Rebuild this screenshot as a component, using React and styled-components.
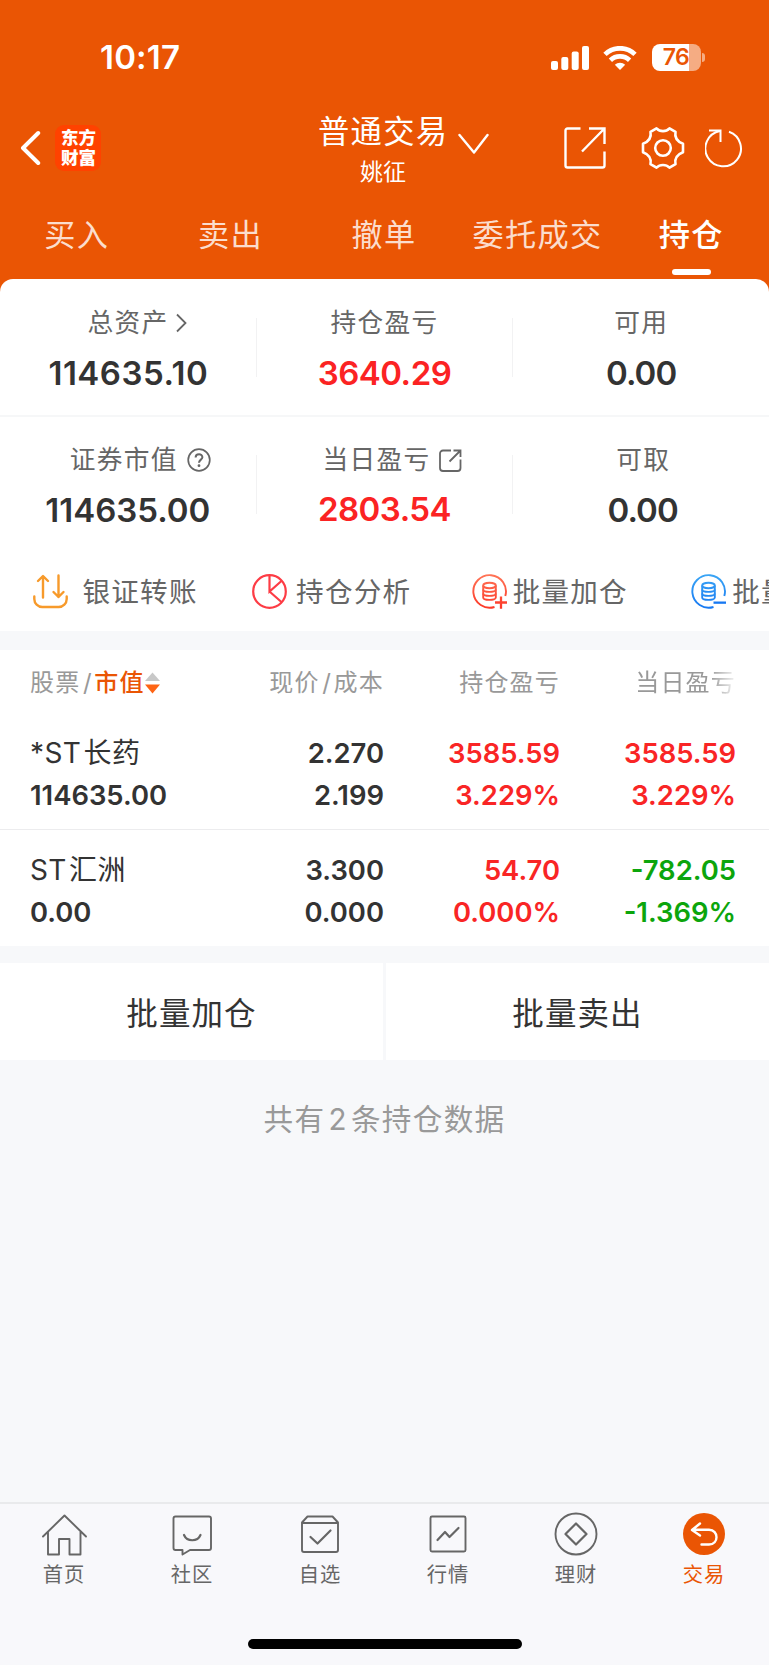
import React, { useState } from 'react';
import styled, { createGlobalStyle } from 'styled-components';

const GlobalStyle = createGlobalStyle`
  * {
    box-sizing: border-box;
  }

  body {
    margin: 0;
    background-color: #f7f8fa;
    font-family: 'Inter', 'Noto Sans CJK SC', sans-serif;
    color: #333;
  }

  svg {
    display: block;
    flex-shrink: 0;
  }
`;

const Page = styled.div`
  width: 100%;
  min-height: 1665px;
  display: flex;
  flex-direction: column;
  overflow: hidden;
`;

const Header = styled.header`
  background-color: #ea5504;
  color: #fff;
`;

const StatusBar = styled.div`
  height: 96px;
  padding: 19px 64.5px 0 100px;
  display: flex;
  align-items: center;
`;

const Clock = styled.div`
  margin: 0 auto 1px 0;
  font-size: 33px;
  font-weight: 600;
  letter-spacing: 0.2px;
`;

const Battery = styled.div`
  width: 49px;
  height: 27px;
  margin: 0 1px 0 15px;
  border-radius: 8px;
  background: linear-gradient(to right, #fff 37px, #f5ac83 37px);
  color: #ea5504;
  font-size: 23px;
  font-weight: 600;
  line-height: 27px;
  letter-spacing: -0.5px;
  text-align: center;
`;

const BatteryTip = styled.div`
  width: 3px;
  height: 9px;
  border-radius: 0 3px 3px 0;
  background-color: #f5ac83;
`;

const NavBar = styled.div`
  height: 104px;
  padding: 0 24px 0 20px;
  display: flex;
  align-items: center;
`;

const AppLogo = styled.div`
  width: 46px;
  height: 46px;
  margin-left: 14px;
  padding: 3px 4px 0 5px;
  border-radius: 9px;
  background-color: #ff4200;
  font-size: 17.5px;
  font-weight: 900;
  line-height: 19.5px;
  text-align: center;
  word-break: break-all;
`;

const Account = styled.div`
  margin: 5px 0 0 217px;
  width: 130px;
  text-align: center;
`;

const AccountType = styled.div`
  font-size: 31.3px;
  line-height: 40px;
  letter-spacing: 1.3px;
  white-space: nowrap;
`;

const AccountName = styled.div`
  margin-top: 3.5px;
  font-size: 23px;
  line-height: 34px;
`;

const AccountArrow = styled.div`
  margin: 0 0 9px 10px;
`;

const NavIcons = styled.div`
  margin-left: auto;
  display: grid;
  grid-template-columns: 77px 64px 40px;
  align-items: center;
`;

const TabList = styled.nav`
  height: 79px;
  padding: 2px 1px 0 0;
  display: grid;
  grid-template-columns: repeat(5, 1fr);
`;

const Tab = styled.div`
  display: flex;
  flex-direction: column;
  align-items: center;
  font-size: 31.2px;
  line-height: 67px;
  letter-spacing: 1.3px;
  font-weight: ${(props) => (props.$active ? 500 : 400)};
  color: ${(props) => (props.$active ? '#fff' : '#fbddcd')};

  &:after {
    content: '';
    width: 39px;
    height: 6px;
    border-radius: 3px;
    background-color: ${(props) => (props.$active ? '#fff' : 'transparent')};
  }
`;

const SummaryBack = styled.div`
  background-color: #ea5504;
`;

const Summary = styled.section`
  background-color: #fff;
  border-radius: 13px 13px 0 0;
`;

const SummaryRow = styled.div`
  height: ${(props) => props.$height}px;
  display: flex;
  border-bottom: ${(props) => (props.$line ? '2px solid #f6f7f8' : 'none')};
`;

const SummaryCell = styled.div`
  flex: 1;
  padding-top: ${(props) => props.$top}px;
`;

const CellDivider = styled.div`
  width: 1px;
  height: 59px;
  margin-top: ${(props) => props.$top}px;
  background-color: #f2f2f3;
`;

const SummaryLabel = styled.div`
  height: 36px;
  padding-left: ${(props) => props.$shift || 0}px;
  display: flex;
  align-items: center;
  justify-content: center;
  color: #666;
  font-size: 25.7px;
  line-height: 36px;
  letter-spacing: 1.3px;
`;

const SummaryValue = styled.div`
  margin-top: ${(props) => props.$gap}px;
  padding-left: ${(props) => props.$shift || 0}px;
  color: ${(props) => (props.$red ? '#fb2323' : '#333')};
  font-size: 33px;
  font-weight: 600;
  line-height: 44px;
  letter-spacing: ${(props) => props.$spacing || 0}px;
  text-align: center;
`;

const Actions = styled.div`
  height: 79px;
  padding: 0 0 3px 32.5px;
  display: flex;
  overflow: hidden;
  background-color: #fff;
`;

const Action = styled.div`
  flex: 0 0 219.6px;
  display: flex;
  align-items: center;
  gap: ${(props) => props.$gap}px;
  color: #666;
  font-size: 27.6px;
  letter-spacing: 1.2px;
  white-space: nowrap;

  svg {
    margin-top: 3px;
  }
`;

const Table = styled.section`
  margin-top: 19px;
  background-color: #fff;
`;

const TableRow = styled.div`
  display: grid;
  grid-template-columns: 1fr 180px 176px 176px;
  padding: 0 33px 0 30px;
`;

const HeadRow = styled(TableRow)`
  height: 82px;
  padding-top: 14.5px;
  color: #999;
  font-size: 24px;
  line-height: 36px;
  letter-spacing: 1.2px;
`;

const HeadCell = styled.div`
  display: flex;
  align-items: center;
  height: 36px;
  justify-content: ${(props) => (props.$left ? 'flex-start' : 'flex-end')};
  ${(props) =>
    props.$fade &&
    'mask-image: linear-gradient(to right, #000 150px, rgba(0, 0, 0, 0.1) 176px);'}
`;

const SortName = styled.span`
  color: #ea5504;
  font-weight: 500;
`;

const Slash = styled.span`
  margin: 0 1.5px 0 2.5px;
`;

const StockRow = styled(TableRow)`
  height: ${(props) => props.$height}px;
  border-bottom: ${(props) => (props.$line ? '1px solid #ececee' : 'none')};
`;

const StockCell = styled.div`
  padding-top: ${(props) => props.$top}px;
  color: ${(props) => props.$color || '#333'};
  font-size: 27.4px;
  font-weight: 600;
  line-height: 42px;
  text-align: ${(props) => (props.$left ? 'left' : 'right')};
  white-space: nowrap;
`;

const StockName = styled.div`
  font-size: 28px;
  font-weight: 400;
  letter-spacing: 0.4px;
  word-spacing: -6px;
`;

const BatchBar = styled.div`
  margin-top: 17px;
  height: 97px;
  display: grid;
  grid-template-columns: 383px 1fr;
  gap: 3px;
`;

const BatchButton = styled.button`
  border: none;
  padding: 0 0 2px 0;
  background-color: #fff;
  color: #333;
  font-family: inherit;
  font-size: 31.5px;
  letter-spacing: 1.1px;
`;

const Total = styled.div`
  margin-top: 39px;
  color: #999;
  font-size: 29.6px;
  line-height: 40px;
  letter-spacing: 1.3px;
  word-spacing: -6.5px;
  text-align: center;
`;

const BottomBar = styled.footer`
  margin-top: auto;
  height: 163px;
  border-top: 2px solid #e9eaec;
  background-color: #f8f8fb;
`;

const BottomTabs = styled.nav`
  height: 135px;
  padding: 8px 1px 0 0;
  display: grid;
  grid-template-columns: repeat(6, 1fr);
`;

const BottomTab = styled.div`
  display: flex;
  flex-direction: column;
  align-items: center;
  color: ${(props) => (props.$active ? '#ea5504' : '#666')};
  font-size: 20.3px;
  line-height: 28px;
  letter-spacing: 1px;

  span {
    margin-top: 3px;
  }
`;

const HomeIndicator = styled.div`
  width: 274px;
  height: 10px;
  margin: 0 auto;
  border-radius: 5px;
  background-color: #000;
`;

const SignalIcon = () => (
  <svg width="38" height="24" viewBox="0 0 38 24" fill="#fff">
    <rect x="0" y="15" width="7" height="9" rx="2" />
    <rect x="10.3" y="11" width="7" height="13" rx="2" />
    <rect x="20.7" y="5.5" width="7" height="18.5" rx="2" />
    <rect x="31" y="0" width="7" height="24" rx="2" />
  </svg>
);

const WifiSvg = styled.svg`
  margin-left: 14px;
`;

const WifiIcon = () => (
  <WifiSvg width="34" height="24" viewBox="0 0 34 24">
    <g fill="none" stroke="#fff" strokeWidth="4.8">
      <path d="M2 8.4A21.5 21.5 0 0 1 32 8.4" />
      <path d="M7.4 14.2A14 14 0 0 1 26.6 14.2" />
    </g>
    <path d="M17 24L11.8 18.8A7.4 7.4 0 0 1 22.2 18.8Z" fill="#fff" />
  </WifiSvg>
);

const BackIcon = () => (
  <svg width="21" height="36" viewBox="0 0 21 36" fill="none" stroke="#fff" strokeWidth="4" strokeLinecap="round" strokeLinejoin="round">
    <path d="M18.2 3L3 18l15.2 15" />
  </svg>
);

const DownIcon = () => (
  <svg width="31" height="22" viewBox="0 0 31 22" fill="none" stroke="#fff" strokeWidth="2.4" strokeLinecap="round" strokeLinejoin="round">
    <path d="M1.5 2L16 19.5L29.5 2" />
  </svg>
);

const ShareIcon = () => (
  <svg width="42" height="42" viewBox="0 0 42 42" fill="none" stroke="#fff" strokeWidth="2.4">
    <path d="M16.5 1.5H3.5a2 2 0 0 0-2 2v35a2 2 0 0 0 2 2h35a2 2 0 0 0 2-2V24.5" />
    <path d="M25 1.5H40.5V17M40 2L18 24.5" />
  </svg>
);

const GearIcon = () => (
  <svg width="44" height="44" viewBox="0 0 44 44" fill="none" stroke="#fff" strokeWidth="2.6" strokeLinejoin="round">
    <path d="M28.5 2.3L34.5 5.8C33.5 11 36 15.5 42 17.8V26.2C36 28.5 33.5 33 34.5 38.2L28.5 41.7C25 38 19 38 15.5 41.7L9.5 38.2C10.5 33 8 28.5 2 26.2V17.8C8 15.5 10.5 11 9.5 5.8L15.5 2.3C19 6 25 6 28.5 2.3Z" />
    <circle cx="22" cy="22" r="7.8" />
  </svg>
);

const RefreshIcon = () => (
  <svg width="40" height="40" viewBox="0 0 40 40" fill="none" stroke="#fff" strokeWidth="2">
    <path d="M24 3.7A17.8 17.8 0 1 1 15 3" />
    <path d="M4 2.6H15.5V14" />
  </svg>
);

const LabelSvg = styled.svg`
  margin-left: ${(props) => props.$gap}px;
`;

const ChevronIcon = () => (
  <LabelSvg $gap={7.5} width="11" height="20" viewBox="0 0 11 20" fill="none" stroke="#666" strokeWidth="1.8">
    <path d="M1 1.5L9.5 10L1 18.5" />
  </LabelSvg>
);

const HelpIcon = () => (
  <LabelSvg $gap={9} width="24" height="24" viewBox="0 0 24 24" fill="none" stroke="#666" strokeWidth="1.7">
    <circle cx="12" cy="12" r="10.8" />
    <path d="M8.6 9.5C8.6 5 15.5 5.2 15.4 9.3C15.3 11.6 12 11.8 12 14.8" strokeWidth="2" />
    <circle cx="12" cy="17.7" r="1.4" fill="#666" stroke="none" />
  </LabelSvg>
);

const DetailIcon = () => (
  <LabelSvg $gap={9} width="23" height="23" viewBox="0 0 23 23" fill="none" stroke="#666" strokeWidth="1.8">
    <path d="M12 1.5H4a3 3 0 0 0-3 3V19a3 3 0 0 0 3 3H18.5a3 3 0 0 0 3-3V10.5" />
    <path d="M14.5 1.5H21.5V8M21 2L10.5 12.5" />
  </LabelSvg>
);

const TransferIcon = () => (
  <svg width="35" height="35" viewBox="0 0 35 35" fill="none" stroke="#f79a2b" strokeWidth="2.4" strokeLinecap="round" strokeLinejoin="round">
    <path d="M1.3 22.5V25a8 8 0 0 0 8 8H25.7a8 8 0 0 0 8-8V22.5" />
    <path d="M10 23.5V2.2M5 7L10 2L15 7" />
    <path d="M25.5 1.5V23M20.5 18L25.5 23L30.5 18" />
  </svg>
);

const PieIcon = () => (
  <svg width="35" height="35" viewBox="0 0 35 35" fill="none" stroke="#fd3c45" strokeWidth="2.2">
    <circle cx="17.5" cy="17.5" r="16.3" />
    <path d="M17.5 1.5V17.5L30 6.5M17.5 17.5L30 28.5" />
  </svg>
);

const CoinsIcon = ({ id, from, to, minus }) => (
  <svg width="35" height="35" viewBox="0 0 35 35" fill="none">
    <defs>
      <linearGradient id={id} gradientUnits="userSpaceOnUse" x1="0" y1="0" x2="0" y2="35">
        <stop offset="0" stopColor={from} />
        <stop offset="1" stopColor={to} />
      </linearGradient>
    </defs>
    <g stroke={`url(#${id})`} strokeWidth="1.9">
      <path d="M33.3 22A16.3 16.3 0 1 0 22.5 33" />
      <ellipse cx="17.5" cy="11.5" rx="6.3" ry="2.7" />
      <path d="M11.2 11.5V23.5C11.2 26.7 23.8 26.7 23.8 23.5V11.5" />
      <path d="M11.2 15.5C11.2 18.7 23.8 18.7 23.8 15.5M11.2 19.5C11.2 22.7 23.8 22.7 23.8 19.5" />
      {minus ? (
        <rect x="22.5" y="27.5" width="12.5" height="2.3" fill={to} stroke="none" />
      ) : (
        <path d="M23 28.5H35M29 22.5V34.8" strokeWidth="2.3" />
      )}
    </g>
  </svg>
);

const SortIcon = () => (
  <svg width="15" height="22" viewBox="0 0 15 22">
    <path d="M0 9L7.5 0.5L15 9Z" fill="#c8c8c8" />
    <path d="M0 12.5H15L7.5 21.5Z" fill="#fe6414" />
  </svg>
);

const BottomIcon = ({ children }) => (
  <svg width="46" height="46" viewBox="0 0 46 46" fill="none" stroke="#666" strokeWidth="1.9" strokeLinecap="round" strokeLinejoin="round">
    {children}
  </svg>
);

const summary = [
  {
    height: 138,
    top: 26,
    gap: 10,
    cells: [
      { label: '总资产', value: '114635.10', icon: <ChevronIcon />, shift: 19, valueShift: 1, spacing: 0.5 },
      { label: '持仓盈亏', value: '3640.29', red: true, spacing: -0.5 },
      { label: '可用', value: '0.00', spacing: -0.9 },
    ],
  },
  {
    height: 135,
    top: 25,
    gap: 10,
    cells: [
      { label: '证券市值', value: '114635.00', icon: <HelpIcon />, shift: 25 },
      { label: '当日盈亏', value: '2803.54', icon: <DetailIcon />, shift: 16, red: true, gap: 9, spacing: -0.5 },
      { label: '可取', value: '0.00', shift: 4, valueShift: 3, spacing: -0.9 },
    ],
  },
];

const stocks = [
  {
    name: '*ST 长药',
    cells: [['2.270', '2.199'], ['3585.59', '3.229%'], ['3585.59', '3.229%']],
    colors: ['#333', '#f92525', '#f92525'],
    worth: '114635.00',
  },
  {
    name: 'ST 汇洲',
    cells: [['3.300', '0.000'], ['54.70', '0.000%'], ['-782.05', '-1.369%']],
    colors: ['#333', '#f92525', '#0ca50c'],
    worth: '0.00',
  },
];

const bottomTabs = [
  {
    name: '首页',
    icon: (
      <path d="M2 24.5L23.5 3.5L45 24.5M7 20V42.5H18V27H28.5V42.5H39.5V20" />
    ),
  },
  {
    name: '社区',
    icon: (
      <>
        <path d="M6.5 4.5H40a2 2 0 0 1 2 2V36a2 2 0 0 1-2 2H21L13.5 42.5V38H6.5a2 2 0 0 1-2-2V6.5a2 2 0 0 1 2-2Z" />
        <path d="M15 23C18 30 28.5 30 31.5 23" strokeWidth="2.2" />
      </>
    ),
  },
  {
    name: '自选',
    icon: (
      <>
        <path d="M5 10.5L10.5 4.5H35.5L41 10.5V38a2 2 0 0 1-2 2H7a2 2 0 0 1-2-2ZM5 11H41" />
        <path d="M13.5 25L20.5 31.5L33.5 18.5" strokeWidth="2.2" />
      </>
    ),
  },
  {
    name: '行情',
    icon: (
      <>
        <rect x="5.5" y="4.5" width="35" height="35" rx="1.5" />
        <path d="M12.5 28L20 20L24.5 25L33.5 16" strokeWidth="2.2" />
      </>
    ),
  },
  {
    name: '理财',
    icon: (
      <>
        <circle cx="23" cy="22" r="20.5" />
        <path d="M23 11.5L33.5 22L23 32.5L12.5 22Z" strokeWidth="2.2" />
      </>
    ),
  },
  {
    name: '交易',
    icon: (
      <>
        <circle cx="23" cy="22" r="21" fill="#ea5504" stroke="none" />
        <path d="M19 11.5L11 18L19 23.5M11.5 17.8H28C38 17.8 38 32.5 28 32.5H20.5" stroke="#fff" strokeWidth="2.4" />
      </>
    ),
  },
];

const App = () => {
  const [tab, setTab] = useState('持仓');

  return (
    <Page>
      <GlobalStyle />
      <Header>
        <StatusBar>
          <Clock>10:17</Clock>
          <SignalIcon />
          <WifiIcon />
          <Battery>76</Battery>
          <BatteryTip />
        </StatusBar>
        <NavBar>
          <BackIcon />
          <AppLogo>东方财富</AppLogo>
          <Account>
            <AccountType>普通交易</AccountType>
            <AccountName>姚征</AccountName>
          </Account>
          <AccountArrow>
            <DownIcon />
          </AccountArrow>
          <NavIcons>
            <ShareIcon />
            <GearIcon />
            <RefreshIcon />
          </NavIcons>
        </NavBar>
        <TabList>
          {['买入', '卖出', '撤单', '委托成交', '持仓'].map((name) => (
            <Tab key={name} $active={tab === name} onClick={() => setTab(name)}>
              {name}
            </Tab>
          ))}
        </TabList>
      </Header>

      <SummaryBack>
        <Summary>
          {summary.map((row, i) => (
            <SummaryRow key={i} $height={row.height} $line={i === 0}>
              {row.cells.map((cell, j) => (
                <React.Fragment key={cell.label}>
                  {j > 0 && <CellDivider $top={row.top + 13} />}
                  <SummaryCell $top={row.top}>
                    <SummaryLabel $shift={cell.shift}>
                      {cell.label}
                      {cell.icon}
                    </SummaryLabel>
                    <SummaryValue
                      $gap={cell.gap || row.gap}
                      $shift={cell.valueShift}
                      $red={cell.red}
                      $spacing={cell.spacing}
                    >
                      {cell.value}
                    </SummaryValue>
                  </SummaryCell>
                </React.Fragment>
              ))}
            </SummaryRow>
          ))}
        </Summary>
      </SummaryBack>

      <Actions>
        <Action $gap={15}>
          <TransferIcon />
          银证转账
        </Action>
        <Action $gap={9}>
          <PieIcon />
          持仓分析
        </Action>
        <Action $gap={6}>
          <CoinsIcon id="coinsAdd" from="#ff7557" to="#fc3727" />
          批量加仓
        </Action>
        <Action $gap={6}>
          <CoinsIcon id="coinsSub" from="#3ba6f5" to="#1778f2" minus />
          批量减仓
        </Action>
      </Actions>

      <Table>
        <HeadRow>
          <HeadCell $left>
            股票<Slash>/</Slash>
            <SortName>市值</SortName>
            <SortIcon />
          </HeadCell>
          <HeadCell>
            现价<Slash>/</Slash>成本
          </HeadCell>
          <HeadCell>持仓盈亏</HeadCell>
          <HeadCell $fade>当日盈亏</HeadCell>
        </HeadRow>
        {stocks.map((stock, i) => (
          <StockRow key={stock.name} $height={i === 0 ? 98 : 116} $line={i === 0}>
            <StockCell $left $top={i === 0 ? 0 : 19}>
              <StockName>{stock.name}</StockName>
              {stock.worth}
            </StockCell>
            {stock.cells.map(([first, second], j) => (
              <StockCell key={j} $top={i === 0 ? 0 : 19} $color={stock.colors[j]}>
                <div>{first}</div>
                <div>{second}</div>
              </StockCell>
            ))}
          </StockRow>
        ))}
      </Table>

      <BatchBar>
        <BatchButton>批量加仓</BatchButton>
        <BatchButton>批量卖出</BatchButton>
      </BatchBar>
      <Total>共有 2 条持仓数据</Total>

      <BottomBar>
        <BottomTabs>
          {bottomTabs.map((item) => (
            <BottomTab key={item.name} $active={item.name === '交易'}>
              <BottomIcon>{item.icon}</BottomIcon>
              <span>{item.name}</span>
            </BottomTab>
          ))}
        </BottomTabs>
        <HomeIndicator />
      </BottomBar>
    </Page>
  );
};

export default App;
